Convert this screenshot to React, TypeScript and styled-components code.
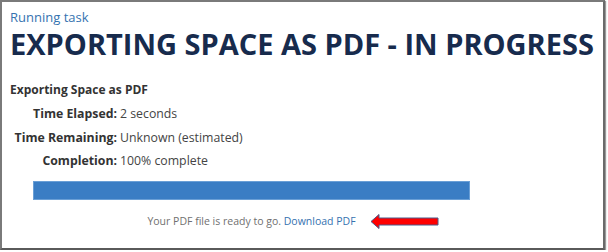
import * as React from "react";
import styled, { createGlobalStyle } from "styled-components";

const GlobalStyle = createGlobalStyle`
  html, body {
    margin: 0;
    padding: 0;
    background: #ffffff;
  }
  body {
    font-family: "Open Sans", "Liberation Sans", sans-serif;
  }
`;

interface Stat {
  label: string;
  value: string;
}

const stats: Stat[] = [
  { label: "Time Elapsed:", value: "2 seconds" },
  { label: "Time Remaining:", value: "Unknown (estimated)" },
  { label: "Completion:", value: "100% complete" },
];

const Frame = styled.div`
  box-sizing: border-box;
  width: 605px;
  height: 250px;
  border: 2px solid #7a7a7a;
  border-right-color: #6a6a6a;
  border-bottom-color: #5a5a5a;
  box-shadow: 1px 1px 1px #9a9a9a;
  padding: 7px 8px 0 8px;
  background: #fff;
`;

const Crumb = styled.a`
  display: block;
  font-size: 13px;
  line-height: 16px;
  color: #3572b0;
  text-decoration: none;
`;

const Title = styled.h1`
  margin: 0;
  font-size: 29px;
  line-height: 38px;
  font-weight: 700;
  color: #172b4d;
  letter-spacing: 0;
  white-space: nowrap;
`;

const Section = styled.h2`
  margin: 18px 0 0 0;
  font-size: 12px;
  line-height: 17px;
  font-weight: 700;
  color: #333;
`;

const Stats = styled.div`
  display: grid;
  grid-template-columns: 107px auto;
  column-gap: 3px;
  row-gap: 6.5px;
  margin-top: 7px;
  font-size: 12.3px;
  line-height: 17px;
  color: #333;
`;

const Label = styled.span`
  font-weight: 700;
  text-align: right;
  white-space: nowrap;
`;

const Value = styled.span`
  color: #444;
`;

const Progress = styled.div`
  margin: 12px 0 0 23px;
  width: 437px;
`;

const Track = styled.div`
  box-sizing: border-box;
  height: 19px;
  background: #3a7dc4;
  border: 1px solid #6a9fd6;
`;

const Footer = styled.div`
  position: relative;
  margin-top: 14px;
  text-align: center;
  font-size: 10.5px;
  line-height: 15px;
  color: #707070;
`;

const Link = styled.a`
  color: #3572b0;
  text-decoration: none;
`;

const Arrow = styled.svg`
  position: absolute;
  left: 337px;
  top: -1px;
`;

export default function App() {
  return (
    <>
      <GlobalStyle />
      <Frame>
        <Crumb href="#">Running task</Crumb>
        <Title>EXPORTING SPACE AS PDF - IN PROGRESS</Title>
        <Section>Exporting Space as PDF</Section>
        <Stats>
          {stats.map((s) => (
            <React.Fragment key={s.label}>
              <Label>{s.label}</Label>
              <Value>{s.value}</Value>
            </React.Fragment>
          ))}
        </Stats>
        <Progress>
          <Track style={{ width: "100%" }} />
          <Footer>
            Your PDF file is ready to go. <Link href="#">Download PDF</Link>
            <Arrow width="70" height="17" viewBox="0 0 70 17">
              <path
                d="M1 8.5 L9 1.5 L9 5 L68 5 L68 12 L9 12 L9 15.5 Z"
                fill="#ff0000"
                stroke="#4a5a8a"
                strokeWidth="1"
                strokeLinejoin="miter"
              />
            </Arrow>
          </Footer>
        </Progress>
      </Frame>
    </>
  );
}
